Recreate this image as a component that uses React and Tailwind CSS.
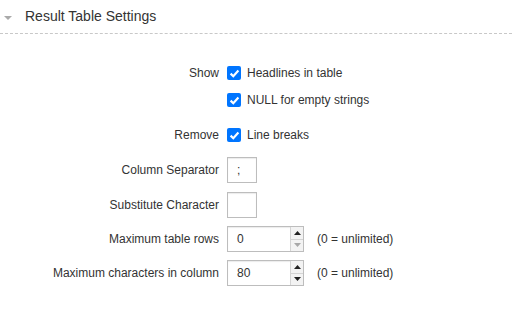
import React from "react";

const Check = ({ label }) => (
  <label className="flex items-center gap-[6px]">
    <span className="w-[14px] h-[14px] rounded-[2px] bg-[#0075ff] flex items-center justify-center">
      <svg width="11" height="11" viewBox="0 0 11 11">
        <path d="M1.6 5.6 L4.3 8.2 L9.4 2.6" fill="none" stroke="#fff" strokeWidth="2.2" />
      </svg>
    </span>
    <span>{label}</span>
  </label>
);

const Spinner = ({ value, atMin }) => (
  <div className="flex items-center gap-[13px]">
    <div className="w-[77px] h-[26px] border border-[#bdbdbd] flex bg-white shadow-[inset_0_1px_1px_rgba(0,0,0,0.08)]">
      <span className="flex-1 pl-[9px] flex items-center">{value}</span>
      <div className="w-[13px] flex flex-col border-l border-[#d4d4d4] bg-[#f3f3f3]">
        <div className="flex-1 flex items-center justify-center border-b border-[#d4d4d4]">
          <svg width="7" height="4" viewBox="0 0 7 4">
            <path d="M0 4 L3.5 0 L7 4 Z" fill="#222" />
          </svg>
        </div>
        <div className="flex-1 flex items-center justify-center">
          <svg width="7" height="4" viewBox="0 0 7 4">
            <path d="M0 0 L3.5 4 L7 0 Z" fill={atMin ? "#a8a8a8" : "#222"} />
          </svg>
        </div>
      </div>
    </div>
    <span>(0 = unlimited)</span>
  </div>
);

const Row = ({ label, children, className = "" }) => (
  <div className={`grid grid-cols-[219px_1fr] gap-x-2 h-[26px] items-center ${className}`}>
    <span className="text-right">{label}</span>
    <div>{children}</div>
  </div>
);

const TextBox = ({ value }) => (
  <div className="w-[30px] h-[26px] border border-[#bdbdbd] pl-[9px] flex items-center bg-white shadow-[inset_0_1px_1px_rgba(0,0,0,0.08)]">
    {value}
  </div>
);

export default function App() {
  return (
    <div className="w-[512px] h-[324px] bg-white text-[#333] text-[12px] font-['Liberation_Sans',Arial,sans-serif]">
      {/* collapsible header */}
      <div className="h-[34px] flex items-center border-b border-dashed border-[#c8c8c8]">
        <svg className="ml-[4px] mt-[2px]" width="8" height="4" viewBox="0 0 8 4">
          <path d="M0 0 L8 0 L4 4 Z" fill="#aaa" />
        </svg>
        <span className="ml-[13px] text-[14px] text-[#333]">Result Table Settings</span>
      </div>

      <div className="pt-[26px]">
        <Row label="Show">
          <Check label="Headlines in table" />
        </Row>
        <Row label="" className="mt-px">
          <Check label="NULL for empty strings" />
        </Row>
        <Row label="Remove" className="mt-[9px]">
          <Check label="Line breaks" />
        </Row>
        <Row label="Column Separator" className="mt-[9px]">
          <TextBox value=";" />
        </Row>
        <Row label="Substitute Character" className="mt-[9px]">
          <TextBox value="" />
        </Row>
        <Row label="Maximum table rows" className="mt-2">
          <Spinner value="0" atMin />
        </Row>
        <Row label="Maximum characters in column" className="mt-2">
          <Spinner value="80" />
        </Row>
      </div>
    </div>
  );
}
